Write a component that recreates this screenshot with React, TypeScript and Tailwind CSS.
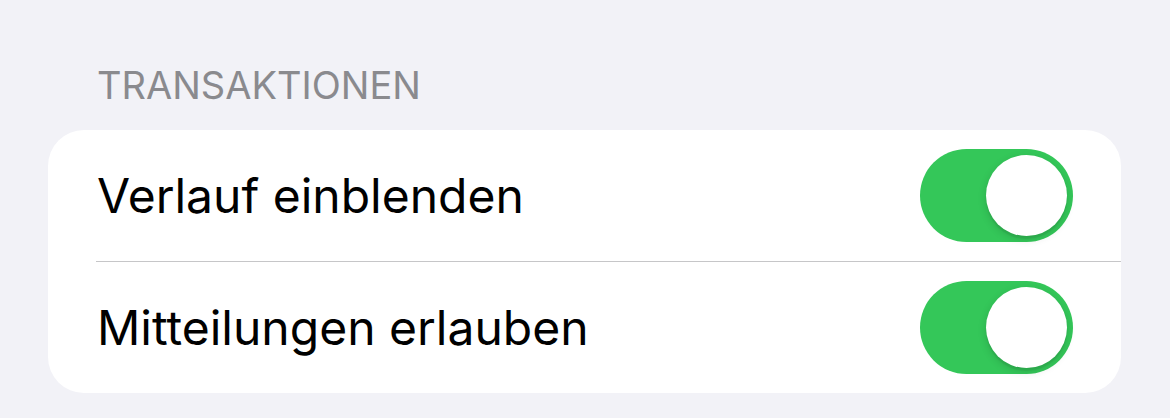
import React, { useState } from 'react';

const Toggle: React.FC<{ on: boolean; onChange: () => void }> = ({ on, onChange }) => (
    <button
        onClick={onChange}
        className={`relative w-[153px] h-[93px] rounded-full shrink-0 ${on ? 'bg-[#34c759]' : 'bg-[#e9e9eb]'}`}
    >
        <span
            className={`absolute top-[6px] w-[81px] h-[81px] rounded-full bg-white shadow-[0_3px_8px_rgba(0,0,0,0.15),0_3px_1px_rgba(0,0,0,0.06)] ${on ? 'left-[66px]' : 'left-[6px]'}`}
        />
    </button>
);

const App: React.FC = () => {
    const [history, setHistory] = useState(true);
    const [notify, setNotify] = useState(true);

    return (
        <div className="w-[1170px] h-[418px] bg-[#f2f2f7] pt-[62px] px-[48px] font-['Inter','Liberation_Sans',sans-serif]">
            <div className="pl-[49px] text-[38px] leading-[46px] text-[#8a8a8e]">TRANSAKTIONEN</div>
            <div className="mt-[22px] w-[1073px] bg-white rounded-[36px] overflow-hidden">
                <div className="h-[131px] flex items-center justify-between pl-[49px] pr-[48px]">
                    <span className="text-[48px] text-black">Verlauf einblenden</span>
                    <Toggle on={history} onChange={() => setHistory(!history)} />
                </div>
                <div className="ml-[48px] h-px bg-[#c6c6c8]" />
                <div className="h-[131px] flex items-center justify-between pl-[49px] pr-[48px]">
                    <span className="text-[48px] text-black">Mitteilungen erlauben</span>
                    <Toggle on={notify} onChange={() => setNotify(!notify)} />
                </div>
            </div>
        </div>
    );
};

export default App;
